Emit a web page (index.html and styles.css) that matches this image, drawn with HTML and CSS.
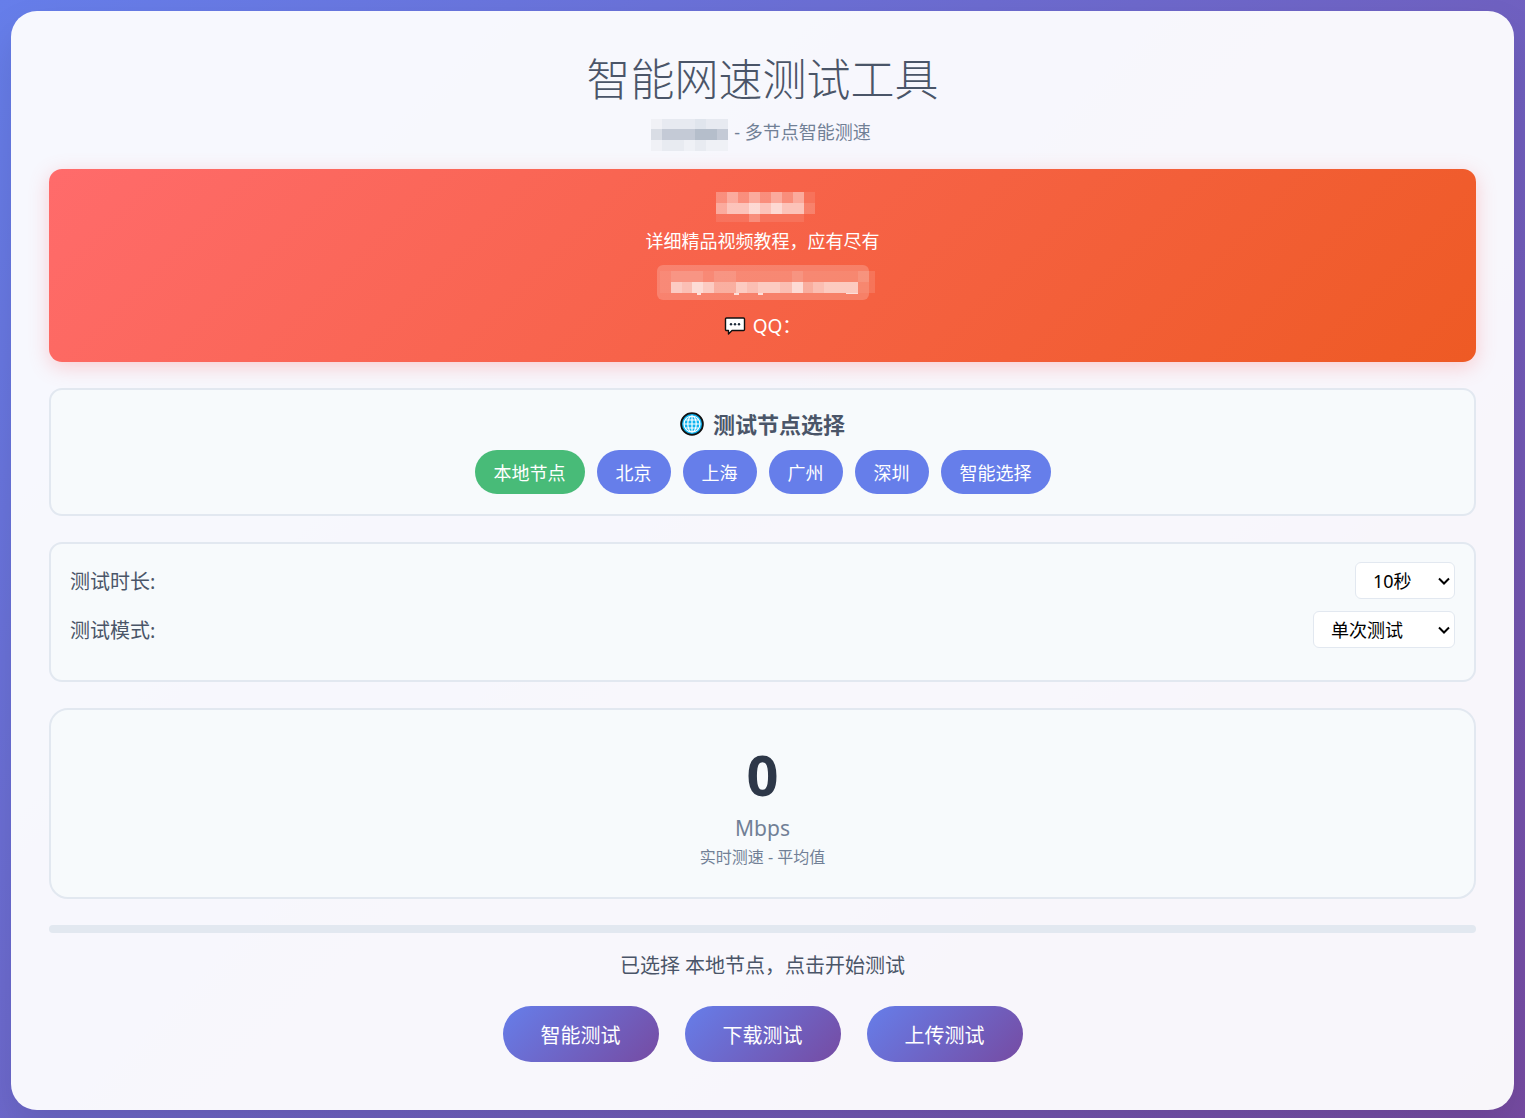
FILE: index.html
```html
<!DOCTYPE html>
<html lang="zh-CN">
<head>
<meta charset="utf-8">
<meta name="viewport" content="width=device-width, initial-scale=1">
<title>智能网速测试工具</title>
<link rel="stylesheet" href="styles.css">
</head>
<body>
<main class="container">
  <header class="header">
    <h1 class="title">智能网速测试工具</h1>
    <p class="subtitle">
      <svg class="masked-name" width="77" height="32" viewBox="0 0 77 32" shape-rendering="crispEdges" aria-hidden="true">
        <path fill="#f0f1f6" d="M0 0h11v10H0zM0 21h11v11H0z"/>
        <path fill="#e7eaf1" d="M11 0h33v10H11zM55 0h22v10H55z"/>
        <path fill="#e0e5ed" d="M44 0h11v10H44z"/>
        <path fill="#d9dde5" d="M0 10h11v11H0z"/>
        <path fill="#c4cad6" d="M11 10h33v11H11zM66 10h11v11H66z"/>
        <path fill="#b5becb" d="M44 10h22v11H44z"/>
        <path fill="#e8ebf1" d="M11 21h22v11H11zM44 21h11v11H44z"/>
        <path fill="#eff1f6" d="M33 21h11v11H33zM55 21h22v11H55z"/>
      </svg>
      <span>- 多节点智能测速</span>
    </p>
  </header>

  <section class="promo">
    <svg class="masked-brand" width="99" height="30" viewBox="0 0 99 30" shape-rendering="crispEdges" fill="#fff" aria-hidden="true">
      <path opacity=".28" d="M0 0h11v11H0zM22 0h11v11H22zM44 0h11v11H44zM66 0h11v11H66z"/>
      <path opacity=".46" d="M11 0h11v11H11zM33 0h11v11H33zM55 0h11v11H55zM77 0h11v11H77zM0 11h11v11H0z"/>
      <path opacity=".62" d="M11 11h22v11H11zM44 11h11v11H44zM66 11h22v11H66z"/>
      <path opacity=".76" d="M33 11h11v11H33zM55 11h11v11H55z"/>
      <path opacity=".1" d="M0 22h88v8H0zM88 0h11v11H88z"/>
      <path opacity=".2" d="M88 11h11v11H88zM33 22h11v8H33z"/>
    </svg>
    <p class="promo-text">详细精品视频教程，应有尽有</p>
    <a class="promo-link" href="#" aria-label="教程网站">
      <svg class="masked-link" width="212" height="35" viewBox="0 0 212 35" shape-rendering="crispEdges" fill="#fff" aria-hidden="true">
        <path opacity=".06" d="M3 6h209v22H3z"/>
        <path opacity=".1" d="M14 6h32v11H14zM57 6h22v11H57zM135 6h11v11h-11zM201 6h11v11h-11z"/>
        <path opacity=".12" d="M212 6h6v22h-6z"/>
        <path opacity=".56" d="M14 17h11v11H14zM46 17h11v11H46zM79 17h11v11H79zM101 17h22v11h-22zM167 17h34v11h-34z"/>
        <path opacity=".46" d="M25 17h10v11H25zM90 17h11v11H90zM123 17h12v11h-12zM156 17h11v11h-11z"/>
        <path opacity=".7" d="M35 17h11v11H35zM135 17h11v11h-11z"/>
        <path opacity=".32" d="M57 17h22v11H57zM146 17h10v11h-10z"/>
        <path opacity=".75" d="M40 28h4v2h-4zM77 28h5v2h-5zM101 28h5v2h-5zM189 28h12v1h-12z"/>
      </svg>
    </a>
    <p class="promo-contact">
      <svg class="chat-icon" width="22" height="20" viewBox="0 0 22 20" aria-hidden="true">
        <path d="M2.500 2h17a1 1 0 0 1 1 1v10.500a1 1 0 0 1-1 1H8L4.500 18v-3.500h-2a1 1 0 0 1-1-1V3a1 1 0 0 1 1-1z" fill="#fff" stroke="#111" stroke-width="1.400" stroke-linejoin="round"/>
        <g fill="#1d2b3a"><circle cx="7" cy="8.300" r="1.200"/><circle cx="11" cy="8.300" r="1.200"/><circle cx="15" cy="8.300" r="1.200"/></g>
      </svg>
      <span>QQ：</span>
    </p>
  </section>

  <section class="card nodes">
    <h2 class="card-title">
      <svg class="globe-icon" width="24" height="24" viewBox="0 0 24 24" aria-hidden="true">
        <circle cx="12" cy="12" r="10.900" fill="#0fb4f0" stroke="#111" stroke-width="1.800"/>
        <g fill="none" stroke="#fff" stroke-width="1.200"><ellipse cx="12" cy="12" rx="4.200" ry="8"/><path d="M12 4v16M4 12h16M5.500 8h13M5.500 16h13"/><circle cx="12" cy="12" r="8"/></g>
      </svg>
      <span>测试节点选择</span>
    </h2>
    <div class="node-list">
      <button class="node active" type="button">本地节点</button>
      <button class="node" type="button">北京</button>
      <button class="node" type="button">上海</button>
      <button class="node" type="button">广州</button>
      <button class="node" type="button">深圳</button>
      <button class="node" type="button">智能选择</button>
    </div>
  </section>

  <section class="card settings">
    <div class="setting">
      <label for="duration">测试时长:</label>
      <select class="select select-short" id="duration"><option>5秒</option><option selected>10秒</option><option>15秒</option><option>30秒</option></select>
    </div>
    <div class="setting">
      <label for="mode">测试模式:</label>
      <select class="select" id="mode"><option>单次测试</option><option>连续测试</option></select>
    </div>
  </section>

  <section class="card result">
    <div class="speed">0</div>
    <div class="unit">Mbps</div>
    <div class="note">实时测速 - 平均值</div>
  </section>

  <div class="progress"></div>
  <p class="status">已选择 本地节点，点击开始测试</p>
  <div class="actions">
    <button class="action" type="button">智能测试</button>
    <button class="action" type="button">下载测试</button>
    <button class="action" type="button">上传测试</button>
  </div>
</main>
</body>
</html>
```
FILE: styles.css
```css
* {
  box-sizing: border-box;
}

body {
  margin: 0;
  min-height: 100vh;
  padding: 11px 11px 8px;
  background: linear-gradient(135deg, #667eea 0%, #764ba2 100%);
  font-family: "Noto Sans", "Noto Sans CJK SC", sans-serif;
  color: #4a5568;
}

h1, h2, p {
  margin: 0;
}

button, select {
  font-family: inherit;
}

.container {
  padding: 38px 38px 48px;
  border-radius: 26px;
  background: rgba(255, 255, 255, 0.95);
  box-shadow: 0 20px 40px rgba(0, 0, 0, 0.1);
  text-align: center;
}

.title {
  font-size: 44px;
  line-height: 60px;
  font-weight: 300;
}

.subtitle {
  display: flex;
  justify-content: center;
  align-items: flex-start;
  gap: 6px;
  height: 32px;
  margin-top: 10px;
  padding-right: 3px;
  font-size: 18px;
  line-height: 26px;
  color: #718096;
}

.promo {
  display: flex;
  flex-direction: column;
  align-items: center;
  margin: 18px 0 26px;
  padding: 23px 20px 22px;
  border-radius: 13px;
  background: linear-gradient(135deg, #ff6b6b 0%, #ee5a24 100%);
  box-shadow: 0 5px 20px rgba(255, 107, 107, 0.3);
  color: #fff;
}

.masked-brand {
  margin-left: 6px;
}

.promo-text {
  margin: 5px 0 10px;
  font-size: 18px;
  line-height: 28px;
}

.promo-link {
  display: flex;
  border-radius: 6px;
  background: rgba(255, 255, 255, 0.2);
}

.masked-link {
  overflow: visible;
}

.promo-contact {
  display: flex;
  align-items: center;
  gap: 7px;
  margin-top: 12px;
  font-size: 19px;
  line-height: 28px;
}

.card {
  margin-bottom: 26px;
  padding: 20px;
  border: 2px solid #e2e8f0;
  border-radius: 13px;
  background: #f7fafc;
}

.card-title {
  display: flex;
  justify-content: center;
  align-items: center;
  gap: 9px;
  margin-bottom: 12px;
  font-size: 22px;
  line-height: 28px;
}

.node-list {
  display: flex;
  flex-wrap: wrap;
  justify-content: center;
  gap: 12px;
}

.node {
  height: 44px;
  padding: 0 19px;
  border: 0;
  border-radius: 22px;
  background: #667eea;
  color: #fff;
  font-size: 18px;
}

.node.active {
  background: #48bb78;
}

.settings {
  padding: 18px 19px 20px;
}

.setting {
  display: flex;
  justify-content: space-between;
  align-items: center;
  margin-bottom: 12px;
  font-size: 20px;
}

.select {
  appearance: none;
  width: 142px;
  height: 37px;
  padding: 0 20px 0 17px;
  border: 1px solid #e2e8f0;
  border-radius: 6px;
  background: #fff url("data:image/svg+xml,%3Csvg xmlns='http://www.w3.org/2000/svg' width='12' height='8' viewBox='0 0 12 8'%3E%3Cpath d='M1 1.500l5 5 5-5' fill='none' stroke='%23000' stroke-width='2'/%3E%3C/svg%3E") no-repeat right 4px center;
  color: #000;
  font-size: 18px;
}

.select-short {
  width: 100px;
}

.result {
  padding: 32px 20px 28px;
  border-radius: 19px;
}

.speed {
  font-size: 56px;
  line-height: 64px;
  font-weight: 700;
  color: #2d3748;
}

.unit {
  margin-top: 5px;
  font-size: 21px;
  line-height: 34px;
  color: #718096;
}

.note {
  font-size: 16px;
  line-height: 24px;
  color: #718096;
}

.progress {
  height: 8px;
  border-radius: 4px;
  background: #e2e8f0;
}

.status {
  margin: 19px 0 26px;
  font-size: 20px;
  line-height: 28px;
}

.actions {
  display: flex;
  flex-wrap: wrap;
  justify-content: center;
  gap: 26px;
}

.action {
  height: 56px;
  padding: 0 38px;
  border: 0;
  border-radius: 28px;
  background: linear-gradient(135deg, #667eea 0%, #764ba2 100%);
  color: #fff;
  font-size: 20px;
}
```
